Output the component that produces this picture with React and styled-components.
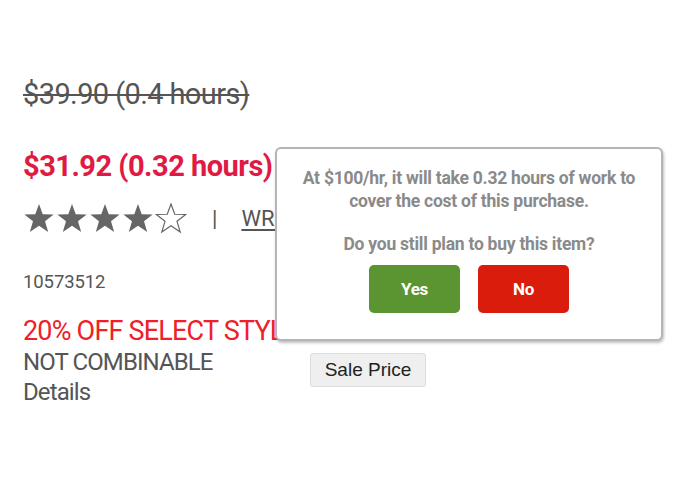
import React from "react";
import styled, { createGlobalStyle } from "styled-components";

const Global = createGlobalStyle`
  html, body { margin: 0; padding: 0; background: #fff; }
  body { font-family: Roboto, "Liberation Sans", sans-serif; }
`;

const Page = styled.div`
  position: relative;
  width: 695px;
  height: 494px;
  overflow: hidden;
  background: #fff;
`;

const Column = styled.div`
  display: flex;
  flex-direction: column;
  align-items: flex-start;
  padding: 74px 0 0 23px;
`;

const OldPrice = styled.div`
  font-size: 29px;
  line-height: 40px;
  color: #555;
  letter-spacing: -0.6px;
  text-decoration: line-through;
  text-decoration-thickness: 2px;
`;

const SalePrice = styled.div`
  margin-top: 32px;
  font-size: 29px;
  line-height: 40px;
  font-weight: 700;
  color: #e01a43;
  letter-spacing: -0.5px;
`;

const RatingRow = styled.div`
  display: flex;
  align-items: center;
  margin-top: 16px;
  height: 32px;
  color: #555;
`;

const Stars = styled.div`
  display: flex;
  gap: 1px;
`;

const Divider = styled.span`
  margin-left: 25px;
  font-size: 22px;
  color: #555;
`;

const Review = styled.span`
  margin-left: 24px;
  font-size: 22px;
  color: #555;
  text-decoration: underline;
  text-underline-offset: 3px;
`;

const Sku = styled.div`
  margin-top: 37px;
  font-size: 18.5px;
  color: #555;
  letter-spacing: -0.1px;
`;

const Promo = styled.div`
  margin-top: 22px;
  font-size: 27px;
  line-height: 32px;
  color: #ef2028;
  letter-spacing: -0.8px;
  white-space: nowrap;
`;

const Note = styled.div`
  font-size: 24px;
  line-height: 30px;
  color: #555;
  letter-spacing: -0.9px;
`;

const Popup = styled.div`
  position: absolute;
  left: 275px;
  top: 147px;
  width: 388px;
  height: 194px;
  box-sizing: border-box;
  background: #fff;
  border: 2px solid #b5b5b5;
  border-radius: 6px;
  box-shadow: 1px 2px 3px rgba(0, 0, 0, 0.25);
  display: flex;
  flex-direction: column;
  align-items: center;
  padding-top: 18px;
`;

const Message = styled.p`
  margin: 0;
  text-align: center;
  font-size: 17.5px;
  line-height: 23px;
  font-weight: 700;
  color: #8a8a8a;
  letter-spacing: -0.25px;
`;

const Question = styled(Message)`
  margin-top: 20px;
`;

const Actions = styled.div`
  display: flex;
  gap: 18px;
  margin-top: 9px;
`;

const Choice = styled.button`
  width: 91px;
  height: 48px;
  border: none;
  border-radius: 5px;
  background: ${(p) => p.$bg};
  color: #fff;
  font-family: Roboto, sans-serif;
  font-weight: 700;
  font-size: 17px;
  letter-spacing: -0.3px;
  cursor: pointer;
`;

const SaleTag = styled.div`
  position: absolute;
  left: 310px;
  top: 353px;
  width: 116px;
  height: 34px;
  box-sizing: border-box;
  display: flex;
  align-items: center;
  justify-content: center;
  background: #efefef;
  border: 1px solid #dcdcdc;
  border-radius: 3px;
  font-family: "Liberation Sans", Arial, sans-serif;
  font-size: 19px;
  color: #222;
`;

const Star = ({ filled }) => (
  <svg width="32" height="31" viewBox="0 0 24 23">
    <path
      d="M12 0.6 L14.8 8.3 L23 8.5 L16.5 13.6 L18.9 21.6 L12 16.9 L5.1 21.6 L7.5 13.6 L1 8.5 L9.2 8.3 Z"
      fill={filled ? "#666" : "none"}
      stroke="#666"
      strokeWidth={filled ? 0 : 0.9}
      strokeLinejoin="miter"
    />
  </svg>
);

export default function App() {
  return (
    <Page>
      <Global />
      <Column>
        <OldPrice>$39.90 (0.4 hours)</OldPrice>
        <SalePrice>$31.92 (0.32 hours)</SalePrice>
        <RatingRow>
          <Stars>
            <Star filled />
            <Star filled />
            <Star filled />
            <Star filled />
            <Star />
          </Stars>
          <Divider>|</Divider>
          <Review>WRITE A REVIEW</Review>
        </RatingRow>
        <Sku>10573512</Sku>
        <Promo>20% OFF SELECT STYLES</Promo>
        <Note>NOT COMBINABLE</Note>
        <Note>Details</Note>
      </Column>
      <SaleTag>Sale Price</SaleTag>
      <Popup>
        <Message>
          At $100/hr, it will take 0.32 hours of work to
          <br />
          cover the cost of this purchase.
        </Message>
        <Question>Do you still plan to buy this item?</Question>
        <Actions>
          <Choice $bg="#5a9532">Yes</Choice>
          <Choice $bg="#d91c0c">No</Choice>
        </Actions>
      </Popup>
    </Page>
  );
}
